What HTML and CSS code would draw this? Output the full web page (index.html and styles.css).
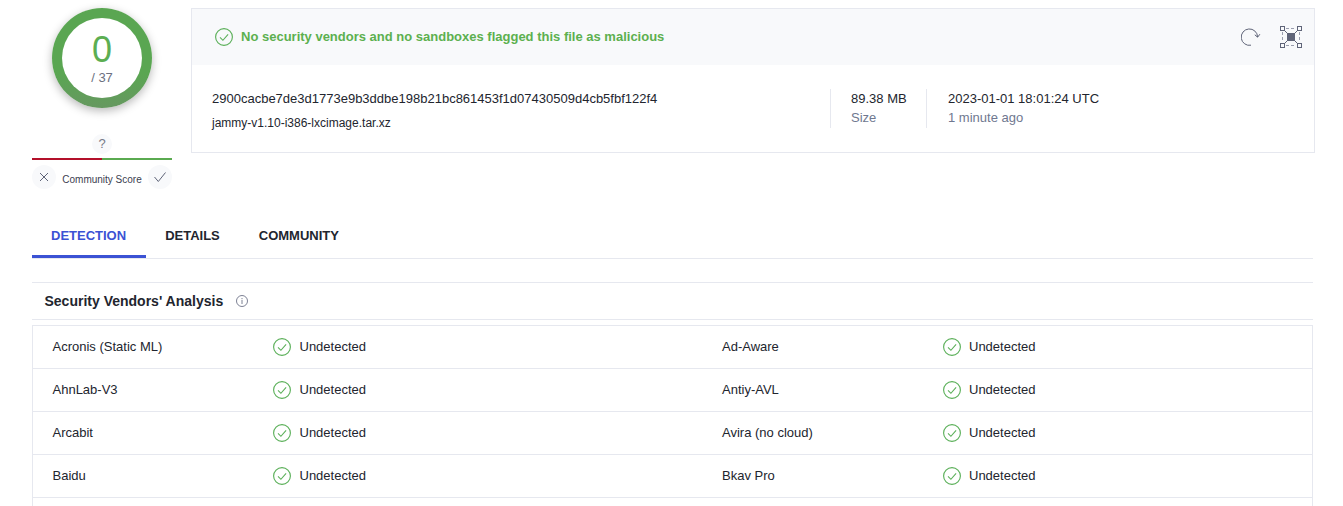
FILE: index.html
```html
<!DOCTYPE html>
<html lang="en">
<head>
    <meta charset="UTF-8">
    <title>Detection</title>
    <link rel="stylesheet" href="styles.css">
</head>
<body>
    <svg class="iconDefs" width="0" height="0">
        <symbol id="okIcon" viewBox="0 0 18 18">
            <circle cx="9" cy="9" r="8.4" fill="none" stroke="#5cb05a" stroke-width="1.15"/>
            <path d="M5 9.4l2.9 2.9 5.2-5.9" fill="none" stroke="#5cb05a" stroke-width="1.1"/>
        </symbol>
    </svg>
    <div class="topRow">
        <div class="scoreColumn">
            <div class="ring">
                <div class="ringInner">
                    <span class="scoreValue">0</span>
                    <span class="scoreTotal">/ 37</span>
                </div>
            </div>
            <div class="questionDot">?</div>
            <div class="voteBar"></div>
            <div class="voteRow">
                <span class="voteDot">
                    <svg width="12" height="12" viewBox="0 0 12 12"><path d="M2 2l8 8M10 2l-8 8" stroke="#5f6478" stroke-width="1" fill="none"/></svg>
                </span>
                <span class="voteLabel">Community Score</span>
                <span class="voteDot">
                    <svg width="14" height="12" viewBox="0 0 14 12"><path d="M1.5 6l3.8 4.5L12.5 1.5" stroke="#5f6478" stroke-width="1" fill="none"/></svg>
                </span>
            </div>
        </div>
        <div class="summaryCard">
            <div class="summaryHead">
                <svg class="verdictIcon" width="18" height="18"><use href="#okIcon"/></svg>
                <span class="verdictText">No security vendors and no sandboxes flagged this file as malicious</span>
                <svg class="reloadIcon" width="20" height="20" viewBox="0 0 20 20">
                    <path d="M10 18.2A8.2 8.2 0 1 1 16.6 10" fill="none" stroke="#5f6478" stroke-width="1"/>
                    <path d="M13.8 7.8l2.8 2.4 2.3-3" fill="none" stroke="#5f6478" stroke-width="1"/>
                </svg>
                <svg class="similarIcon" width="24" height="24" viewBox="0 0 24 24">
                    <g fill="none" stroke="#5f6478" stroke-width="1">
                        <rect x="1.5" y="1.5" width="4" height="4"/>
                        <rect x="18.5" y="1.5" width="4" height="4"/>
                        <rect x="1.5" y="18.5" width="4" height="4"/>
                        <rect x="18.5" y="18.5" width="4" height="4"/>
                        <path d="M7 3.5h10M7 20.5h10M3.5 7v10M20.5 7v10" stroke-dasharray="3 2" stroke="#9a9eae"/>
                        <path d="M5.5 5.5l13 13M18.5 5.5l-13 13"/>
                    </g>
                    <rect x="8" y="8" width="8" height="8" fill="#5f6478"/>
                </svg>
            </div>
            <div class="summaryBody">
                <div class="fileNames">
                    <div class="fileHash">2900cacbe7de3d1773e9b3ddbe198b21bc861453f1d07430509d4cb5fbf122f4</div>
                    <div class="fileName">jammy-v1.10-i386-lxcimage.tar.xz</div>
                </div>
                <div class="fileStat statSize">
                    <div class="statValue">89.38 MB</div>
                    <div class="statLabel">Size</div>
                </div>
                <div class="fileStat statDate">
                    <div class="statValue">2023-01-01 18:01:24 UTC</div>
                    <div class="statLabel">1 minute ago</div>
                </div>
            </div>
        </div>
    </div>

    <div class="tabs">
        <a class="tab tabActive">DETECTION</a>
        <a class="tab">DETAILS</a>
        <a class="tab">COMMUNITY</a>
    </div>

    <div class="sectionTitle">
        <span>Security Vendors' Analysis</span>
        <svg width="12" height="12" viewBox="0 0 12 12">
            <circle cx="6" cy="6" r="5.5" fill="none" stroke="#7d8194" stroke-width="1"/>
            <path d="M6 5v4M6 3v1.2" stroke="#7d8194" stroke-width="1" fill="none"/>
        </svg>
    </div>

    <div class="vendorTable">
        <div class="vendorRow">
            <div class="vendorName">Acronis (Static ML)</div>
            <div class="vendorResult"><svg width="18" height="18"><use href="#okIcon"/></svg><span>Undetected</span></div>
            <div class="vendorName">Ad-Aware</div>
            <div class="vendorResult"><svg width="18" height="18"><use href="#okIcon"/></svg><span>Undetected</span></div>
        </div>
        <div class="vendorRow">
            <div class="vendorName">AhnLab-V3</div>
            <div class="vendorResult"><svg width="18" height="18"><use href="#okIcon"/></svg><span>Undetected</span></div>
            <div class="vendorName">Antiy-AVL</div>
            <div class="vendorResult"><svg width="18" height="18"><use href="#okIcon"/></svg><span>Undetected</span></div>
        </div>
        <div class="vendorRow">
            <div class="vendorName">Arcabit</div>
            <div class="vendorResult"><svg width="18" height="18"><use href="#okIcon"/></svg><span>Undetected</span></div>
            <div class="vendorName">Avira (no cloud)</div>
            <div class="vendorResult"><svg width="18" height="18"><use href="#okIcon"/></svg><span>Undetected</span></div>
        </div>
        <div class="vendorRow">
            <div class="vendorName">Baidu</div>
            <div class="vendorResult"><svg width="18" height="18"><use href="#okIcon"/></svg><span>Undetected</span></div>
            <div class="vendorName">Bkav Pro</div>
            <div class="vendorResult"><svg width="18" height="18"><use href="#okIcon"/></svg><span>Undetected</span></div>
        </div>
    </div>
</body>
</html>
```

FILE: styles.css
```css
html,
body {
    height: 100%;
    overflow: hidden;
}

body {
    margin: 0;
    padding: 8px 30px 0 32px;
    box-sizing: border-box;
    background-color: #fff;
    color: #22252e;
    font-family: "Liberation Sans", Arial, sans-serif;
    font-size: 13px;
}

.iconDefs {
    position: absolute;
}

.topRow {
    display: flex;
    margin-right: -2px;
}

.scoreColumn {
    width: 140px;
    flex-shrink: 0;
    display: flex;
    flex-direction: column;
    align-items: center;
}

.ring {
    width: 100px;
    height: 100px;
    padding: 10px;
    box-sizing: border-box;
    border-radius: 50%;
    background: linear-gradient(#5aa652 65%, #669860);
    box-shadow: 0 3px 10px rgba(0, 0, 0, 0.28);
}

.ringInner {
    height: 100%;
    border-radius: 50%;
    background: #fff;
    display: flex;
    flex-direction: column;
    align-items: center;
    padding-top: 12px;
    box-sizing: border-box;
}

.scoreValue {
    font-size: 36px;
    line-height: 40px;
    color: #5cae52;
}

.scoreTotal {
    font-size: 13px;
    line-height: 16px;
    color: #6b7080;
}

.questionDot {
    width: 20px;
    height: 20px;
    margin-top: 26px;
    border-radius: 50%;
    background: #f8f9fb;
    color: #777b88;
    font-size: 13px;
    line-height: 20px;
    text-align: center;
}

.voteBar {
    width: 100%;
    height: 2px;
    margin-top: 4px;
    background: linear-gradient(to right, #b3102a 50%, #5aaa50 50%);
}

.voteRow {
    width: 100%;
    display: flex;
    justify-content: space-between;
    align-items: center;
    margin-top: 5px;
}

.voteDot {
    width: 24px;
    height: 24px;
    border-radius: 50%;
    background: #f8f9fb;
    display: flex;
    align-items: center;
    justify-content: center;
}

.voteLabel {
    font-size: 10px;
    color: #3c4050;
    padding-top: 5px;
}

.summaryCard {
    flex-grow: 1;
    height: 145px;
    margin-left: 19px;
    box-sizing: border-box;
    border: 1px solid #e6e8ef;
}

.summaryHead {
    height: 56px;
    display: flex;
    align-items: center;
    padding: 0 11px 0 23px;
    background-color: #f8f9fb;
}

.verdictText {
    flex-grow: 1;
    margin-left: 8px;
    padding-bottom: 2px;
    font-size: 13px;
    font-weight: bold;
    color: #5cb04f;
}

.similarIcon {
    margin-left: 18px;
}

.summaryBody {
    display: flex;
    align-items: flex-start;
    padding: 24px 0 0 20px;
}

.fileNames {
    width: 618px;
    padding-top: 1px;
}

.fileHash {
    line-height: 18px;
}

.fileName {
    margin-top: 8px;
    font-size: 12px;
    line-height: 15px;
}

.fileStat {
    height: 39px;
    padding-left: 20px;
    border-left: 1px solid #e6e8ef;
    line-height: 19px;
}

.statSize {
    width: 75px;
}

.statDate {
    padding-left: 21px;
}

.statLabel {
    color: #6f7890;
}

.tabs {
    display: flex;
    height: 45px;
    margin-top: 24px;
    border-bottom: 1px solid #e6e8ef;
}

.tab {
    padding: 0 20px 0 19px;
    height: 45px;
    line-height: 45px;
    box-sizing: border-box;
    font-size: 13px;
    font-weight: bold;
    color: #22252e;
}

.tabActive {
    color: #3b52d4;
    border-bottom: 3px solid #3b52d4;
}

.sectionTitle {
    display: flex;
    align-items: center;
    gap: 12.5px;
    height: 36px;
    margin-top: 23px;
    padding-left: 12.5px;
    border-top: 1px solid #e6e8ef;
    border-bottom: 1px solid #e6e8ef;
    font-size: 14px;
    font-weight: bold;
}

.vendorTable {
    min-height: 220px;
    margin-top: 5px;
    border: 1px solid #e6e8ef;
    border-bottom: none;
}

.vendorRow {
    display: grid;
    grid-template-columns: 220px 449.5px 220px 1fr;
    height: 43px;
    box-sizing: border-box;
    align-items: center;
    padding-left: 20px;
    border-bottom: 1px solid #e6e8ef;
}

.vendorName {
    margin-left: -0.5px;
    padding-bottom: 1px;
}

.vendorResult {
    display: flex;
    align-items: center;
    gap: 8.5px;
}

.vendorResult span {
    padding-bottom: 1px;
}
```
